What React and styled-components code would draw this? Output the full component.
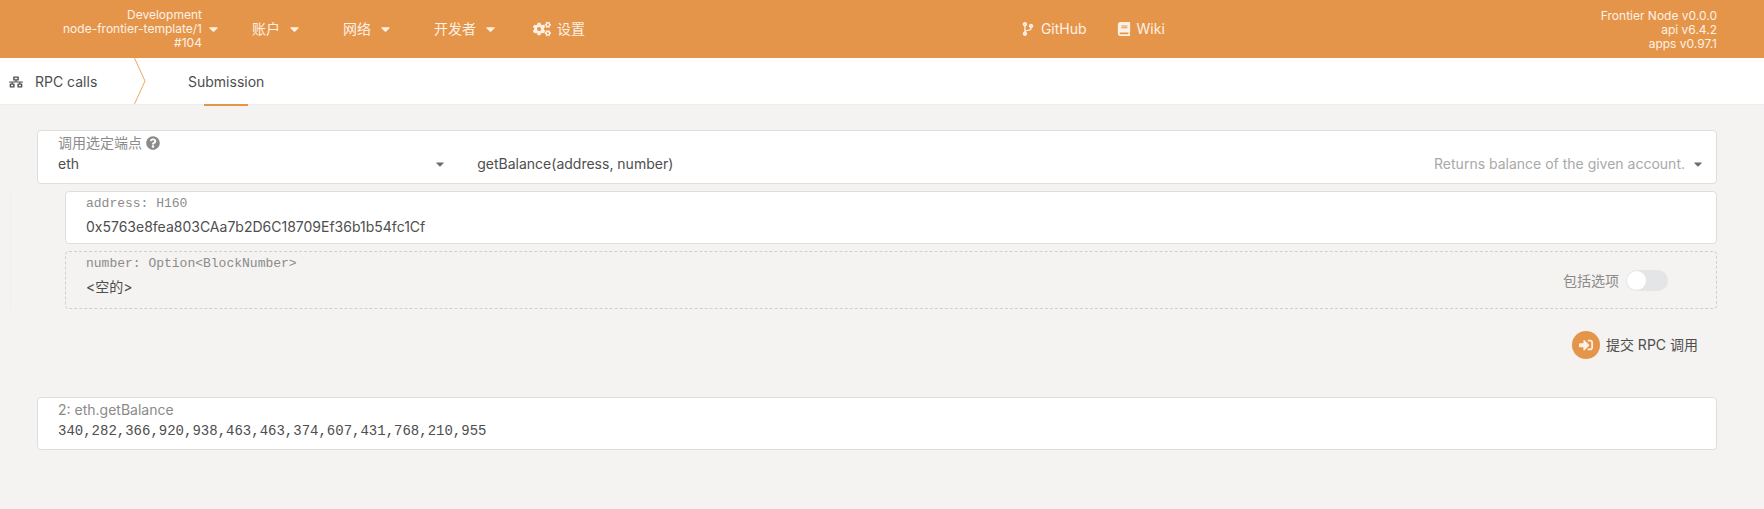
import React, { useState } from "react";
import styled, { createGlobalStyle } from "styled-components";
import {
  FaBook,
  FaCaretDown,
  FaCodeBranch,
  FaCogs,
  FaNetworkWired,
  FaQuestionCircle,
  FaSignInAlt,
} from "react-icons/fa";

const orange = "#e59549";

const GlobalStyle = createGlobalStyle`
  * {
    box-sizing: border-box;
  }
  body {
    margin: 0;
    background: #f4f3f1;
    color: #4e4e4e;
    font: 14px/20px Inter, "Noto Sans CJK SC", sans-serif;
  }
  input, select, button {
    margin: 0;
    padding: 0;
    border: 0;
    background: none;
    color: inherit;
    font: inherit;
  }
`;

const Header = styled.header`
  display: flex;
  justify-content: space-between;
  align-items: center;
  height: 58px;
  padding: 0 47px 0 63px;
  background: ${orange};
  color: #fdf1e5;
`;

const Nav = styled.nav`
  display: flex;
  align-items: center;
  gap: ${(props) => props.$gap};
`;

const ChainButton = styled.button`
  display: flex;
  align-items: center;
  gap: 7px;
  margin-right: -10px;
  cursor: pointer;
`;

const SmallLines = styled.div`
  font-size: 12px;
  line-height: 14px;
  text-align: right;
`;

const Versions = styled(SmallLines)`
  padding-top: 2px;
`;

const MenuButton = styled.button`
  display: flex;
  align-items: center;
  gap: 10px;
  cursor: pointer;
`;

const NavLink = styled.a`
  display: flex;
  align-items: center;
  gap: 6px;
  color: inherit;
  text-decoration: none;
`;

const SettingsLink = styled(NavLink)`
  margin-left: -6px;
`;

const Caret = styled(FaCaretDown).attrs({ viewBox: "0 160 320 192" })`
  width: ${(props) => props.$width || "9px"};
  height: 6px;
`;

const Tabs = styled.nav`
  display: flex;
  height: 47px;
  padding-left: 9px;
  background: #fff;
  border-bottom: 1px solid #ededed;
`;

const TabsTitle = styled.div`
  display: flex;
  align-items: center;
  gap: 12px;
  width: 125px;
  padding-top: 2px;
`;

const Arrow = styled.svg`
  width: 12px;
  height: 46px;
  fill: none;
  stroke: #eda765;
`;

const Tab = styled.a`
  display: flex;
  flex-direction: column;
  align-items: center;
  height: 48px;
  margin-left: 42px;
  padding-top: 14px;
  color: inherit;
  text-decoration: none;
  &::after {
    content: "";
    width: 44px;
    height: 2px;
    margin-top: auto;
    background: ${orange};
  }
`;

const Main = styled.main`
  padding: 25px 47px 24px 10px;
`;

const Card = styled.section`
  min-height: ${(props) => props.$height || "53px"};
  margin-left: 27px;
  padding: 1px 20px;
  background: #fff;
  border: 1px solid #dededd;
  border-radius: 4px;
`;

const Params = styled.div`
  display: grid;
  gap: 7px;
  margin: 7px 0;
  border-left: 1px solid #f0efed;
`;

const ParamCard = styled(Card)`
  margin-left: 54px;
`;

const OptionCard = styled(ParamCard)`
  display: flex;
  justify-content: space-between;
  align-items: flex-start;
  padding-right: 48px;
  background: none;
  border: 1px dashed #cfcfce;
`;

const Label = styled.label`
  display: flex;
  align-items: center;
  gap: 4px;
  height: 21px;
  color: #8b8b8a;
  font-family: ${(props) => (props.$mono ? '"Liberation Mono", monospace' : "inherit")};
  font-size: ${(props) => (props.$mono ? "13px" : "14px")};
`;

const Field = styled.input`
  display: block;
  width: 100%;
  height: 24px;
  outline: none;
`;

const Selects = styled.div`
  display: grid;
  grid-template-columns: 25% 1fr;
  gap: 8px;
  margin-right: -7px;
`;

// select and its caret share one cell
const Picker = styled.div`
  display: grid;
  align-items: center;
  height: 22px;
  padding-right: ${(props) => (props.$narrow ? "24px" : "0")};
  > * {
    grid-area: 1 / 1;
  }
`;

const Select = styled.select`
  width: 100%;
  height: 22px;
  appearance: none;
  outline: none;
`;

const PickerHint = styled.span`
  display: flex;
  align-items: center;
  justify-self: end;
  gap: 9px;
  margin-right: 1px;
  color: #a9a9a8;
  pointer-events: none;
  svg {
    color: #6e6e6e;
  }
`;

const ToggleLabel = styled.label`
  display: flex;
  align-items: center;
  align-self: center;
  gap: 7px;
  padding-top: 1px;
  color: #8b8b8a;
`;

const Toggle = styled.input`
  display: flex;
  width: 42px;
  height: 21px;
  padding: 1px;
  appearance: none;
  border-radius: 11px;
  background: ${(props) => (props.checked ? orange : "#e3e5e7")};
  justify-content: ${(props) => (props.checked ? "flex-end" : "flex-start")};
  &::before {
    content: "";
    width: 19px;
    height: 19px;
    border-radius: 50%;
    background: #fff;
  }
`;

const Actions = styled.div`
  display: flex;
  justify-content: flex-end;
  margin: 22px 19px 38px 0;
`;

const Submit = styled.button`
  display: flex;
  align-items: center;
  gap: 6px;
  cursor: pointer;
`;

const SubmitIcon = styled.span`
  display: grid;
  place-items: center;
  width: 28px;
  height: 28px;
  border-radius: 50%;
  background: ${orange};
  color: #fdf1e5;
`;

const Output = styled.output`
  display: block;
  font-family: "Liberation Mono", monospace;
  line-height: 22px;
`;

const menus = ["账户", "网络", "开发者"];

export default function App() {
  const [address, setAddress] = useState("0x5763e8fea803CAa7b2D6C18709Ef36b1b54fc1Cf");
  const [include, setInclude] = useState(false);

  return (
    <>
      <GlobalStyle />
      <Header>
        <Nav $gap="44px">
          <ChainButton>
            <SmallLines>
              <div>Development</div>
              <div>node-frontier-template/1</div>
              <div>#104</div>
            </SmallLines>
            <Caret />
          </ChainButton>
          {menus.map((name) => (
            <MenuButton key={name}>
              {name}
              <Caret />
            </MenuButton>
          ))}
          <SettingsLink href="#/settings">
            <FaCogs size={18} />
            设置
          </SettingsLink>
        </Nav>
        <Nav $gap="30px">
          <NavLink href="#github">
            <FaCodeBranch size={14} />
            GitHub
          </NavLink>
          <NavLink href="#wiki">
            <FaBook size={14} />
            Wiki
          </NavLink>
        </Nav>
        <Versions>
          <div>Frontier Node v0.0.0</div>
          <div>api v6.4.2</div>
          <div>apps v0.97.1</div>
        </Versions>
      </Header>

      <Tabs>
        <TabsTitle>
          <FaNetworkWired size={14} />
          RPC calls
        </TabsTitle>
        <Arrow viewBox="0 0 12 46">
          <path d="M0.5 0L11 23L0.5 46" />
        </Arrow>
        <Tab href="#/rpc">Submission</Tab>
      </Tabs>

      <Main>
        <Card $height="54px">
          <Label htmlFor="section">
            调用选定端点
            <FaQuestionCircle size={14} />
          </Label>
          <Selects>
            <Picker $narrow>
              <Select id="section" defaultValue="eth">
                <option>eth</option>
              </Select>
              <PickerHint>
                <Caret $width="8px" />
              </PickerHint>
            </Picker>
            <Picker>
              <Select aria-label="method" defaultValue="getBalance(address, number)">
                <option>getBalance(address, number)</option>
              </Select>
              <PickerHint>
                Returns balance of the given account.
                <Caret $width="8px" />
              </PickerHint>
            </Picker>
          </Selects>
        </Card>

        <Params>
          <ParamCard>
            <Label $mono htmlFor="address">address: H160</Label>
            <Field id="address" value={address} onChange={(e) => setAddress(e.target.value)} />
          </ParamCard>
          <OptionCard $height="58px">
            <div>
              <Label $mono htmlFor="number">number: Option&lt;BlockNumber&gt;</Label>
              <Field id="number" value="<空的>" readOnly />
            </div>
            <ToggleLabel>
              包括选项
              <Toggle
                type="checkbox"
                checked={include}
                onChange={(e) => setInclude(e.target.checked)}
              />
            </ToggleLabel>
          </OptionCard>
        </Params>

        <Actions>
          <Submit>
            <SubmitIcon>
              <FaSignInAlt size={14} />
            </SubmitIcon>
            提交 RPC 调用
          </Submit>
        </Actions>

        <Card>
          <Label htmlFor="result">2: eth.getBalance</Label>
          <Output id="result">340,282,366,920,938,463,463,374,607,431,768,210,955</Output>
        </Card>
      </Main>
    </>
  );
}
